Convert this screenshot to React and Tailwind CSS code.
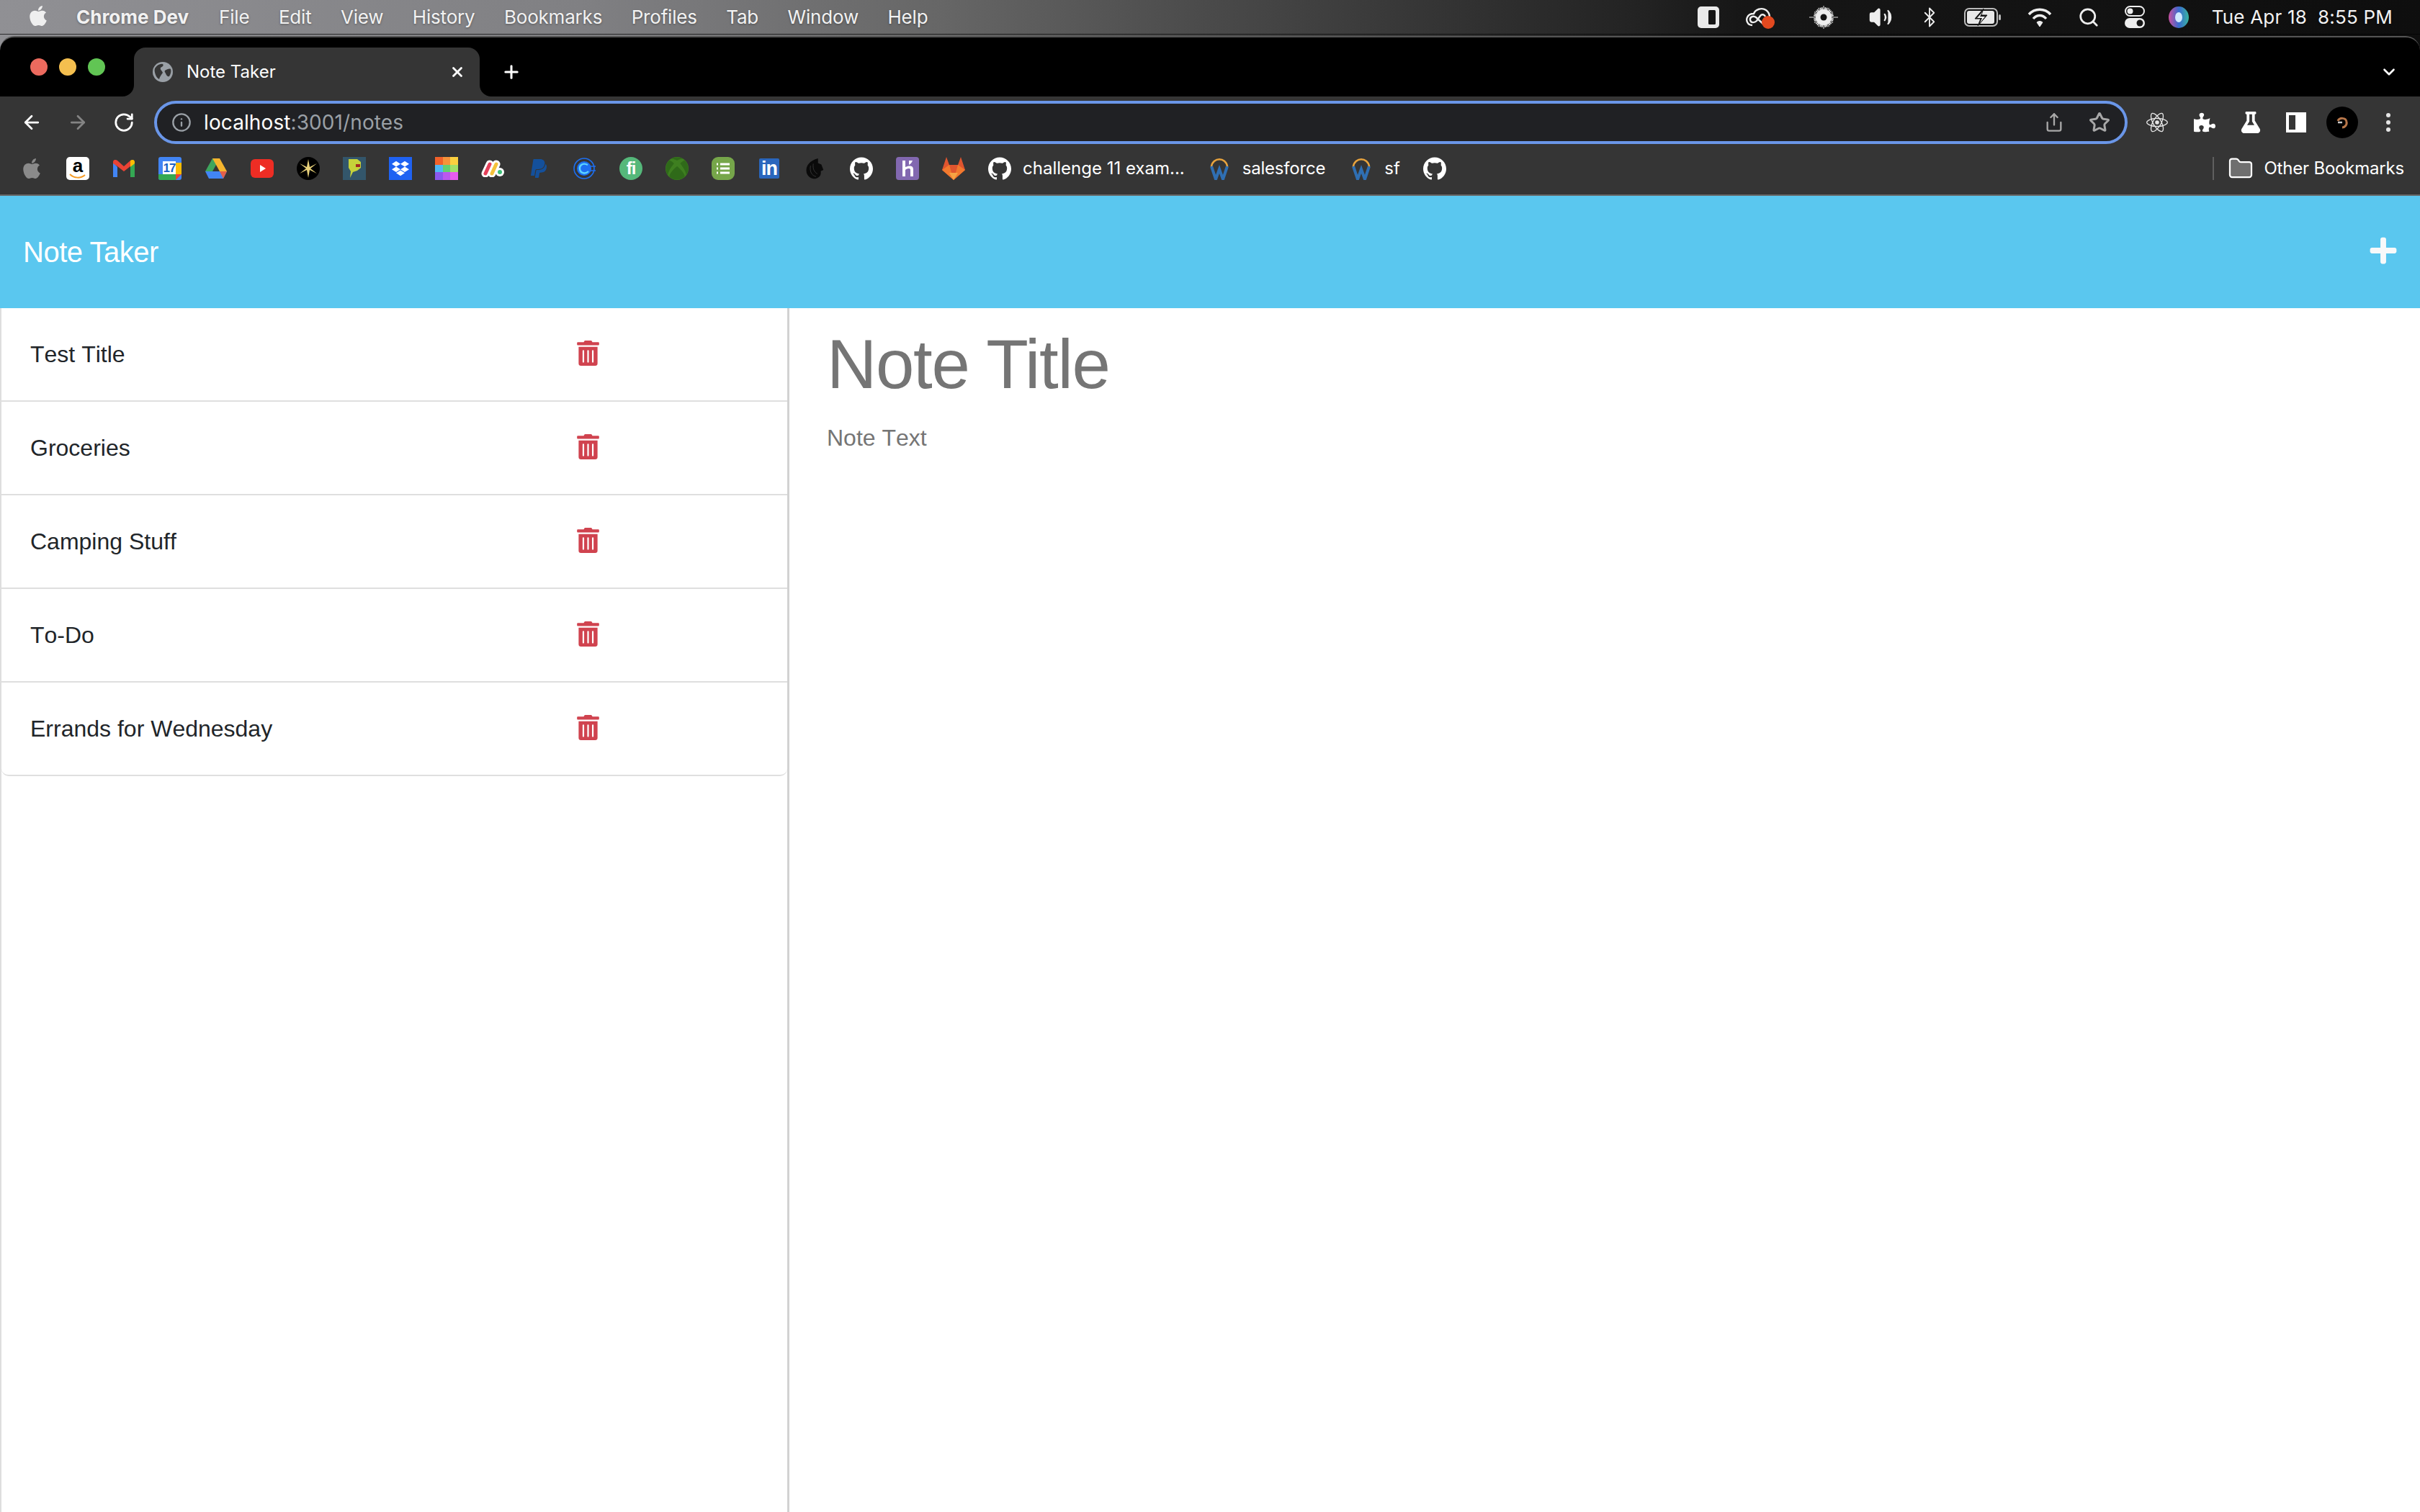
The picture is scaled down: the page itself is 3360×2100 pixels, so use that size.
import React from "react";
import { FaApple, FaTrashAlt, FaPlus, FaPuzzlePiece, FaFlask, FaPaypal, FaXbox } from "react-icons/fa";
import { SiGithub, SiDropbox, SiReact } from "react-icons/si";
import { ArrowLeft, ArrowRight, RotateCw, Star, Share, Search, Bluetooth, Volume2, Info, ChevronDown, X, Plus, Folder } from "lucide-react";

const Globe = () => (
  <svg viewBox="0 0 28 28" className="w-7 h-7 shrink-0">
    <circle cx="14" cy="14" r="14" fill="#9aa0a6" />
    <path d="M3 9c3-5 8-7 11-6 2 2-1 4-3 5-1 3 2 4 3 7-2 3-4 5-5 9-2-1-4-3-5-6-1-3-2-6-1-9zM17 12c3-2 6-3 8-2 1 3 0 7-2 10-3 1-4-2-5-4-1-2-2-3-1-4z" fill="#353535" />
  </svg>
);

const MenuItems = ["File", "Edit", "View", "History", "Bookmarks", "Profiles", "Tab", "Window", "Help"];

function SunIcon() {
  const rays = Array.from({ length: 36 }, (_, i) => i * 10);
  return (
    <svg viewBox="0 0 40 32" className="w-10 h-8 overflow-visible">
      {rays.map((r) => (
        <line key={r} x1="20" y1="9" x2="20" y2={r === 90 || r === 270 ? "-4" : r % 90 === 0 ? "0" : r % 30 === 0 ? "1" : "2"} stroke={r % 30 === 0 ? "#999" : "#eee"} strokeWidth="1.6" transform={`rotate(${r} 20 16)`} />
      ))}
      <circle cx="20" cy="16" r="11" fill="#eee" />
      <circle cx="20" cy="16" r="4.5" fill="#151515" />
    </svg>
  );
}

function MenuBar() {
  return (
    <div className="h-[48px] flex items-center shrink-0 text-[#f2f2f2] text-[26px] leading-none [text-shadow:0_1px_3px_rgba(0,0,0,0.35)] border-b border-black/70">
      <FaApple className="ml-[38px] w-[30px] h-[32px] text-[#efefef] mb-[3px]" />
      <span className="ml-[38px] font-bold mr-[42px]">Chrome Dev</span>
      <div className="flex gap-[40.5px] tracking-[-0.2px]">
        {MenuItems.map((m) => (
          <span key={m}>{m}</span>
        ))}
      </div>
      <div className="ml-auto flex items-center pr-[38px]">
        <svg viewBox="0 0 30 30" className="w-[30px] h-[30px] mr-[37px]">
          <rect width="30" height="30" rx="5" fill="#eaeaea" />
          <rect x="15" y="5" width="10" height="20" rx="1.5" fill="#151515" />
        </svg>
        <svg viewBox="0 0 40 32" className="w-10 h-8 mr-[48px]">
          <path d="M9 27 C2 27 0 20 2 16 C4 11 9 11 11 11 C13 5 22 2 28 6 C32 9 33 12 33 16" fill="none" stroke="#eee" strokeWidth="2.4" />
          <path d="M26 27 L14 16 C10 13 5 16 6 20 C7 24 12 24 15 21 L20 14 C22 11 26 12 27 15" fill="none" stroke="#eee" strokeWidth="2.4" />
          <circle cx="31" cy="23" r="9" fill="#e2491f" />
        </svg>
        <SunIcon />
        <Volume2 className="w-[38px] h-[34px] ml-[40px] text-[#eee] fill-[#eee]" strokeWidth={1.5} />
        <Bluetooth className="w-[24px] h-[34px] ml-[37px] text-[#eee] scale-125" strokeWidth={1.5} />
        <svg viewBox="0 0 52 26" className="w-[52px] h-[26px] ml-[36px]">
          <rect x="1" y="1" width="45" height="24" rx="6" fill="none" stroke="#bbb" strokeWidth="2" />
          <rect x="4" y="4" width="38" height="18" rx="3" fill="#e8e8e8" />
          <rect x="48" y="9" width="3" height="8" rx="1.5" fill="#bbb" />
          <path d="M27 1 L15 15 H23 L19 25 L32 10 H24 Z" fill="#151515" stroke="#151515" strokeWidth="1" />
          <path d="M26 5 L18 14 H25 L22 21 L29 12 H22 Z" fill="#eee" />
        </svg>
        <svg viewBox="0 0 34 28" className="w-[34px] h-[28px] ml-[36px]" fill="none" stroke="#eee" strokeWidth="3.4">
          <path d="M2 10 C10 1 24 1 32 10" />
          <path d="M8 16 C13 10 21 10 26 16" />
          <path d="M13 21 L17 27 L21 21 C18 19 16 19 13 21 Z" fill="#eee" strokeWidth="1" />
        </svg>
        <Search className="w-[30px] h-[30px] ml-[36px] text-[#eee]" strokeWidth={2.2} />
        <svg viewBox="0 0 28 32" className="w-[28px] h-[32px] ml-[35px]">
          <rect x="1" y="1" width="26" height="13" rx="6.5" fill="none" stroke="#eee" strokeWidth="2" />
          <circle cx="7.5" cy="7.5" r="4" fill="#eee" />
          <rect x="0" y="17" width="28" height="14" rx="7" fill="#eee" />
          <circle cx="21" cy="24" r="4.5" fill="#151515" />
        </svg>
        <svg viewBox="0 0 28 30" className="w-[28px] h-[30px] ml-[33px]">
          <defs>
            <linearGradient id="siri" x1="0" x2="1" y1="0" y2="0">
              <stop offset="0" stopColor="#c9509f" />
              <stop offset="0.5" stopColor="#3a6ad0" />
              <stop offset="1" stopColor="#38b59f" />
            </linearGradient>
          </defs>
          <ellipse cx="14" cy="15" rx="14" ry="15" fill="url(#siri)" />
          <ellipse cx="14" cy="15" rx="5" ry="7" fill="#cfe8ff" />
        </svg>
        <span className="ml-[32px] whitespace-pre tracking-[0.2px]">Tue Apr 18  8:55 PM</span>
      </div>
    </div>
  );
}

function TabStrip() {
  return (
    <div className="h-[84px] bg-black rounded-t-[20px] border-t-2 border-[#555] flex items-end shrink-0">
      <div className="w-[186px] self-stretch flex items-center pl-[42px] gap-[16px]">
        <span className="w-6 h-6 rounded-full bg-[#ec6a5e]" />
        <span className="w-6 h-6 rounded-full bg-[#f4bf4f]" />
        <span className="w-6 h-6 rounded-full bg-[#61c554]" />
      </div>
      <div className="relative w-[480px] h-[68px] bg-[#353535] rounded-t-[16px] flex items-center pl-[26px] pr-[20px] text-[24px] text-white">
        <svg viewBox="0 0 16 16" className="absolute -left-4 bottom-0 w-4 h-4"><path d="M16 0V16H0A16 16 0 0 0 16 0Z" fill="#353535" /></svg>
        <svg viewBox="0 0 16 16" className="absolute -right-4 bottom-0 w-4 h-4"><path d="M0 0V16H16A16 16 0 0 1 0 0Z" fill="#353535" /></svg>
        <Globe />
        <span className="ml-[19px]">Note Taker</span>
        <X className="ml-auto w-[22px] h-[22px] text-white" strokeWidth={3} />
      </div>
      <Plus className="ml-[30px] mb-[20px] w-[28px] h-[28px] text-white" strokeWidth={2.6} />
      <ChevronDown className="ml-auto mr-[30px] mb-[21px] w-[26px] h-[26px] text-white" strokeWidth={2.4} />
    </div>
  );
}

function UrlBar() {
  return (
    <div className="h-[70px] flex items-center shrink-0 pt-[2px]">
      <div className="w-[214px] flex items-center pl-[32px] gap-[40px] shrink-0">
        <ArrowLeft className="w-6 h-6 text-white scale-125" strokeWidth={2.2} />
        <ArrowRight className="w-6 h-6 text-[#848484] scale-125" strokeWidth={2.2} />
        <RotateCw className="w-6 h-6 text-white scale-125" strokeWidth={2.2} />
      </div>
      <div className="w-[2740px] h-[60px] rounded-full border-4 border-[#6a96e8] bg-[#202124] flex items-center pl-[20px] pr-[20px] text-[28px]">
        <Info className="w-[28px] h-[28px] text-[#9aa0a6]" strokeWidth={2} />
        <span className="ml-[17px] text-white tracking-[0.1px]">localhost<span className="text-[#9aa0a6]">:3001/notes</span></span>
        <Share className="ml-auto w-[28px] h-[30px] text-[#a8a8a8]" strokeWidth={2} />
        <Star className="ml-[34px] w-[30px] h-[30px] text-[#a8a8a8]" strokeWidth={2.4} />
      </div>
      <div className="flex items-center ml-[26px]">
        <SiReact className="w-[30px] h-[34px] text-[#e6e6e6]" />
        <FaPuzzlePiece className="ml-[36px] w-[30px] h-[30px] text-white" />
        <FaFlask className="ml-[34px] w-[30px] h-[30px] text-white" />
        <svg viewBox="0 0 28 28" className="ml-[34px] w-[28px] h-[28px]">
          <rect width="28" height="28" fill="#fff" />
          <rect x="4" y="4" width="9" height="20" fill="#353535" />
        </svg>
        <svg viewBox="0 0 44 44" className="ml-[28px] w-[44px] h-[44px]">
          <circle cx="22" cy="22" r="22" fill="#000" />
          <path d="M16 20c2-5 11-5 12 1 1 5-3 8-6 8" fill="none" stroke="#b8774a" strokeWidth="3" />
          <path d="M16 22h6" stroke="#c8c8c8" strokeWidth="2.5" />
        </svg>
        <svg viewBox="0 0 8 26" className="ml-[38px] w-[8px] h-[26px]">
          <circle cx="4" cy="3" r="3" fill="#e5e5e5" />
          <circle cx="4" cy="13" r="3" fill="#e5e5e5" />
          <circle cx="4" cy="23" r="3" fill="#e5e5e5" />
        </svg>
      </div>
    </div>
  );
}

const Cell = ({ children }) => <div className="w-[64px] h-[32px] flex items-center justify-center shrink-0">{children}</div>;

function BookmarkIcons() {
  return (
    <>
      <Cell><FaApple className="w-[28px] h-[32px] text-[#8a8a8a]" /></Cell>
      <Cell>
        <div className="w-8 h-8 bg-white rounded-[5px] flex flex-col items-center text-black font-['Liberation_Sans',sans-serif] font-bold text-[26px] leading-[25px] relative">
          a
          <svg viewBox="0 0 32 8" className="absolute left-0 bottom-[1px] w-8 h-2"><path d="M5 1 C11 7 20 7 26 2" fill="none" stroke="#f59a23" strokeWidth="2" /></svg>
        </div>
      </Cell>
      <Cell>
        <svg viewBox="0 0 30 24" className="w-[30px] h-[24px]">
          <path d="M0 3 L0 24 H6 V10Z" fill="#4285f4" />
          <path d="M30 3 V24 H24 V10Z" fill="#34a853" />
          <path d="M0 3 C0 0 3 -1 6 1 L15 9 L24 1 L24 9 L15 16 L6 9 L0 5Z" fill="#ea4335" />
          <path d="M24 1 C27 -1 30 0 30 3 V5 L24 10Z" fill="#fbbc04" />
        </svg>
      </Cell>
      <Cell>
        <div className="w-8 h-8 relative bg-[#4285f4] rounded-[3px]">
          <svg viewBox="0 0 32 32" className="absolute inset-0">
            <path d="M0 24H24V32H3Q0 32 0 29Z" fill="#34a853" />
            <path d="M24 8H32V24H24Z" fill="#fbbc04" />
            <path d="M24 24H32L24 32Z" fill="#ea4335" />
            <rect x="6" y="6" width="18" height="18" fill="#fff" />
          </svg>
          <span className="absolute left-[6px] top-[6px] w-[18px] h-[18px] flex items-center justify-center text-[#1a5fc4] text-[17px] font-bold font-['Liberation_Sans',sans-serif] tracking-[-1px] leading-none">17</span>
        </div>
      </Cell>
      <Cell>
        <svg viewBox="0 0 30 28" className="w-[30px] h-[28px]">
          <path d="M10 0 H20 L10 18 H0Z" fill="#3ea55d" />
          <path d="M20 0 L30 18 H20 L10 0Z" fill="#f5b52e" />
          <path d="M0 18 H30 L25 28 H5Z" fill="#4285f4" />
          <path d="M20 18H30L25 28Z" fill="#e2604a" />
        </svg>
      </Cell>
      <Cell>
        <svg viewBox="0 0 32 26" className="w-8 h-[26px]">
          <rect width="32" height="26" rx="6" fill="#ee2d24" />
          <path d="M13 8 L21 13 L13 18Z" fill="#fff" />
        </svg>
      </Cell>
      <Cell>
        <svg viewBox="0 0 32 32" className="w-8 h-8">
          <circle cx="16" cy="16" r="16" fill="#000" />
          <path d="M16 3 L18 14 L28 9 L19 16 L28 23 L18 18 L16 29 L14 18 L4 23 L13 16 L4 9 L14 14Z" fill="#e9d27a" />
        </svg>
      </Cell>
      <Cell>
        <svg viewBox="0 0 32 32" className="w-8 h-8">
          <rect width="32" height="32" fill="#33566b" />
          <path d="M8 3 H20 L25 7 V15 L20 19 L14 21 L10 29 L11 20 L8 15Z" fill="#c6d23a" />
          <rect x="18" y="10" width="6" height="4" fill="#a32a20" />
        </svg>
      </Cell>
      <Cell>
        <div className="w-8 h-8 bg-[#1f62f2] flex items-center justify-center">
          <SiDropbox className="w-[24px] h-[24px] text-white" />
        </div>
      </Cell>
      <Cell>
        <div className="w-8 h-8 grid grid-cols-3 grid-rows-3">
          <span className="bg-[#f1612a]" /><span className="bg-[#f5933a]" /><span className="bg-[#fbd03f]" />
          <span className="bg-[#4fb8f5]" /><span className="bg-[#63cf70]" /><span className="bg-[#a1e06a]" />
          <span className="bg-[#8a58ee]" /><span className="bg-[#bb58ee]" /><span className="bg-[#e85cee]" />
        </div>
      </Cell>
      <Cell>
        <svg viewBox="0 0 32 24" className="w-8 h-6">
          <path d="M6 19 L12 6 M15 19 L21 6" stroke="#fff" strokeWidth="11" strokeLinecap="round" />
          <circle cx="26" cy="17" r="6" fill="#fff" />
          <path d="M6 19 L12 6" stroke="#e5405a" strokeWidth="5" strokeLinecap="round" />
          <path d="M15 19 L21 6" stroke="#f5c23a" strokeWidth="5" strokeLinecap="round" />
          <circle cx="26" cy="17" r="3" fill="#3cbf77" />
        </svg>
      </Cell>
      <Cell><FaPaypal className="w-[22px] h-[32px] text-[#14509b]" /></Cell>
      <Cell>
        <svg viewBox="0 0 32 32" className="w-8 h-8" fill="none">
          <circle cx="15" cy="16" r="14" stroke="#1e6ff0" strokeWidth="1.6" />
          <circle cx="15" cy="16" r="10" fill="#1e6ff0" />
          <path d="M20 11 C12 7 8 13 9 17 C10 23 17 24 21 20" stroke="#5cd3ff" strokeWidth="2.4" />
          <path d="M21 13 H31 M21 19 H31" stroke="#1e6ff0" strokeWidth="1.6" />
        </svg>
      </Cell>
      <Cell>
        <div className="w-8 h-8 rounded-full bg-[#55b87a] flex items-center justify-center text-white font-bold text-[24px] leading-none font-['Liberation_Sans',sans-serif] tracking-[-1px]">fi</div>
      </Cell>
      <Cell>
        <div className="w-8 h-8 rounded-full bg-[#3e7f20] flex items-center justify-center">
          <FaXbox className="w-8 h-8 text-[#2f6a19]" />
        </div>
      </Cell>
      <Cell>
        <svg viewBox="0 0 32 32" className="w-8 h-8">
          <rect width="32" height="32" rx="9" fill="#76a64a" />
          <path d="M12 10H25M12 16H25M12 22H25" stroke="#fff" strokeWidth="3" />
          <path d="M7 10H9M7 16H9M7 22H9" stroke="#fff" strokeWidth="3" />
        </svg>
      </Cell>
      <Cell>
        <div className="w-[28px] h-[28px] bg-[#2a66bd] rounded-[2px] flex items-center justify-center text-white font-bold text-[27px] leading-none font-['Liberation_Sans',sans-serif] tracking-[-1px]">in</div>
      </Cell>
      <Cell>
        <svg viewBox="0 0 32 32" className="w-[30px] h-8">
          <path d="M20 1 C8 4 1 12 3 22 C5 29 12 32 17 31 C23 29 25 25 24 20 L28 18 L25 10 L20 8 Z" fill="#0a0a0a" />
          <path d="M9 12 C7 20 11 27 17 28 M13 9 C12 16 14 21 19 24" stroke="#353535" strokeWidth="1" fill="none" />
        </svg>
      </Cell>
      <Cell><SiGithub className="w-8 h-8 text-white" /></Cell>
      <Cell>
        <svg viewBox="0 0 32 32" className="w-8 h-8">
          <rect width="32" height="32" rx="4" fill="#8268b0" />
          <path d="M9 5 H13 V14 C17 12 24 11 24 17 V27 H20 V18 C20 15 15 16 13 18 V27 H9Z M18 5 H23 C22 8 20 10 18 11Z M9 21 L13 24 L9 27Z" fill="#fff" />
        </svg>
      </Cell>
      <Cell>
        <svg viewBox="0 0 32 32" className="w-8 h-8">
          <path d="M6 0 L10 11 H22 L26 0 L32 18 L16 32 L0 18Z" fill="#e0552f" />
          <path d="M0 18 L10 11 L16 32Z" fill="#f2792e" />
          <path d="M32 18 L22 11 L16 32Z" fill="#f2792e" />
          <path d="M10 22 H22 L16 32Z" fill="#f6a443" />
        </svg>
      </Cell>
    </>
  );
}

const Workday = () => (
  <svg viewBox="0 0 28 32" className="w-[28px] h-8" fill="none">
    <path d="M3 13 C5 0 23 0 25 13" stroke="#e8a33d" strokeWidth="2.6" strokeLinecap="round" />
    <path d="M3 13 L9 31 L14 17 L19 31 L25 13" stroke="#2f6fb3" strokeWidth="4" />
  </svg>
);

function BookmarksBar() {
  return (
    <div className="h-[68px] border-b-2 border-[#666] flex items-center pl-[12px] pr-[22px] text-white text-[24px] shrink-0 pb-[6px]">
      <BookmarkIcons />
      <Cell><SiGithub className="w-8 h-8 text-white" /></Cell>
      <span>challenge 11 exam...</span>
      <div className="ml-[34px] w-[28px]"><Workday /></div>
      <span className="ml-[18px] tracking-[-0.2px]">salesforce</span>
      <div className="ml-[36px] w-[28px]"><Workday /></div>
      <span className="ml-[18px]">sf</span>
      <div className="ml-[32px]"><SiGithub className="w-8 h-8 text-white" /></div>
      <div className="ml-auto w-[2px] h-[32px] bg-[#5f5f5f]" />
      <Folder className="ml-[19px] w-[36px] h-[36px] text-white fill-[#6f6f6f]" strokeWidth={1.5} />
      <span className="ml-[14px] tracking-[-0.2px]">Other Bookmarks</span>
    </div>
  );
}

const notes = ["Test Title", "Groceries", "Camping Stuff", "To-Do", "Errands for Wednesday"];

function NoteRow({ title }) {
  return (
    <li className="h-[130px] border-b-2 border-[#dfdfdf] flex items-center pl-[40px] last:rounded-bl-[10px] last:rounded-br-[10px]">
      <span className="w-[759px] text-[32px] text-[#212529] [font-kerning:none]">{title}</span>
      <FaTrashAlt className="w-[31px] h-[35px] text-[#d0434f] mb-[4px]" />
    </li>
  );
}

export default function App() {
  return (
    <div className="w-[3360px] h-[2100px] overflow-hidden flex flex-col bg-[linear-gradient(90deg,#909094_0%,#808083_24%,#666666_39%,#4a4a4a_50%,#333333_60%,#222222_68%,#161616_72%,#0e0e0e_100%)] font-['Inter',sans-serif]">
      <MenuBar />
      <div className="flex-1 flex flex-col min-h-0 mt-[2px]">
        <TabStrip />
        <div className="bg-[#353535] flex flex-col shrink-0">
          <UrlBar />
          <BookmarksBar />
        </div>
        <div className="flex-1 flex flex-col min-h-0 bg-white font-['Liberation_Sans',sans-serif]">
          <nav className="h-[156px] bg-[#5ac7ef] flex items-center justify-between pl-[32px] pr-[30px] shrink-0">
            <span className="text-white text-[40px] tracking-[-0.5px]">Note Taker</span>
            <FaPlus className="w-[42px] h-[42px] text-[#f8f9fa] mb-[4px]" />
          </nav>
          <div className="flex-1 flex min-h-0">
            <aside className="w-[1096px] border-l-2 border-l-[#dedede] border-r-[3px] border-r-[#d2d2d2] shrink-0">
              <ul>
                {notes.map((n) => (
                  <NoteRow key={n} title={n} />
                ))}
              </ul>
            </aside>
            <main className="pl-[52px] pt-[20px] flex flex-col">
              <div className="text-[96px] leading-[1.2] text-[#757575] tracking-[-1.3px]">Note Title</div>
              <div className="text-[32px] text-[#757575] mt-[21px] leading-[1.5] [font-kerning:none]">Note Text</div>
            </main>
          </div>
        </div>
      </div>
    </div>
  );
}
